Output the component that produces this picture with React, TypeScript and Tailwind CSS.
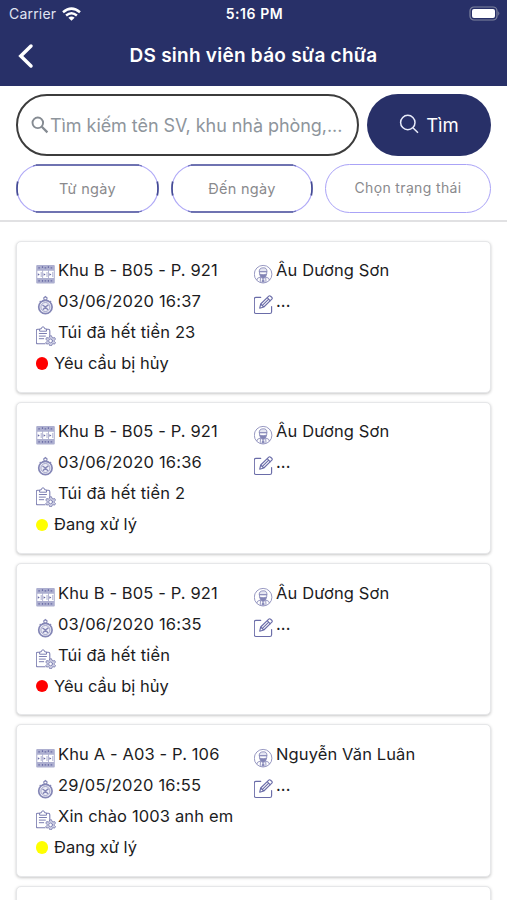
import React from "react";

type Request = {
  room: string;
  time: string;
  note: string;
  status: string;
  dot: string;
  name: string;
};

const requests: Request[] = [
  { room: "Khu B - B05 - P. 921", time: "03/06/2020 16:37", note: "Túi đã hết tiền 23", status: "Yêu cầu bị hủy", dot: "bg-[#ff0000]", name: "Âu Dương Sơn" },
  { room: "Khu B - B05 - P. 921", time: "03/06/2020 16:36", note: "Túi đã hết tiền 2", status: "Đang xử lý", dot: "bg-[#ffff00]", name: "Âu Dương Sơn" },
  { room: "Khu B - B05 - P. 921", time: "03/06/2020 16:35", note: "Túi đã hết tiền", status: "Yêu cầu bị hủy", dot: "bg-[#ff0000]", name: "Âu Dương Sơn" },
  { room: "Khu A - A03 - P. 106", time: "29/05/2020 16:55", note: "Xin chào 1003 anh em", status: "Đang xử lý", dot: "bg-[#ffff00]", name: "Nguyễn Văn Luân" },
];

const iconClass = "mt-[9px] h-5 w-5 shrink-0";

function RoomIcon() {
  return (
    <svg className={iconClass} viewBox="0 0 20 20" fill="none">
      <rect x="0.2" y="1" width="18.6" height="18.6" rx="1" fill="#adafd0" />
      <path d="M1.3 6.8h4.9v7.2H1.3zM7.1 6.8H12v7.2H7.1zM12.9 6.8h4.9v7.2h-4.9z" fill="#fff" />
      <path d="M1.8 9.2l2 1.3-2 1.3zM7.6 9.2l2 1.3-2 1.3zM13.4 9.2l2 1.3-2 1.3z" fill="#6668a3" />
      <path d="M5.2 8v5M11 8v5M16.8 8v5" stroke="#a5a7ca" strokeWidth="0.9" />
      <path d="M2.3 3.8h1.6M8.6 3.8h1.6M14.6 3.8h1.6M2.3 16.8h1.6M8.6 16.8h1.6M14.6 16.8h1.6M6.5 2.2v1.7M12.4 2.2v1.7M6.5 16v1.7M12.4 16v1.7" stroke="#6c6ea6" strokeWidth="1.2" />
    </svg>
  );
}

function ClockIcon() {
  return (
    <svg className={iconClass} viewBox="0 0 20 20" fill="none" stroke="#8486b6">
      <circle cx="9.4" cy="12" r="6.7" fill="#eeeef6" strokeWidth="1.7" />
      <circle cx="9.4" cy="12" r="4.5" strokeWidth="0.7" />
      <path d="M8.2 5L7.7 3l1.7-1.5L11.1 3l-.5 2zM3.7 6l1.1 1.1M15.1 6L14 7.1" strokeWidth="1.1" />
      <path d="M6.5 10l2.9 2 3-2.1M9.4 12L7 14.8M9.4 12l2.5 2.9" strokeWidth="1.4" />
    </svg>
  );
}

function TaskIcon() {
  return (
    <svg className={iconClass} viewBox="0 0 20 20" fill="none" stroke="#7c7eb1" strokeLinecap="round" strokeLinejoin="round">
      <path d="M3.3 3.2H1.7Q.3 3.2.3 4.7v11.5q0 1.5 1.4 1.5h7.4M10.9 3.2h1.5q1.4 0 1.4 1.5v4.5" strokeWidth="1.1" />
      <path d="M3.6 4.8V2.9h1.6Q5.5.8 7 .8t1.8 2.1h1.7v1.9z" strokeWidth="1" />
      <path d="M3.3 7.5h7.2M3.3 10.1h6.1M3.3 12.7h4.4" strokeWidth="1" />
      <path d="M13.8 9.8h1.7l.5 1.6 1 .6 1.6-.5.9 1.6-1.2 1.2v1.1l1.2 1.2-.9 1.5-1.6-.4-1 .6-.5 1.5h-1.7l-.5-1.5-1-.6-1.6.4-.9-1.5 1.2-1.2v-1.1l-1.2-1.2.9-1.6 1.6.5 1-.6z" fill="#d0d1e5" strokeWidth="0.9" />
      <circle cx="14.6" cy="14.9" r="1.9" fill="#fff" strokeWidth="0.9" />
    </svg>
  );
}

function StudentIcon() {
  return (
    <svg className={iconClass} viewBox="0 0 20 20" fill="none" stroke="#8587b7" strokeWidth="0.85">
      <circle cx="9.1" cy="10.2" r="8.8" />
      <path d="M5.2 7.6Q5.1 4 9.1 3.8t3.9 3.8z" fill="#e5e6f1" />
      <path d="M4.9 7.8h8.4M5.5 8v1.9q.7 3.4 3.6 3.4t3.6-3.4V8" />
      <path d="M5.9 10.2q3.2 1 6.4 0l-.7 2.2-2.5 2-2.5-2z" fill="#8284b4" />
      <path d="M2.7 16.2l1-2 3-1.3 2.4 2.5 2.4-2.5 3 1.3 1 2M6.5 13.2l-.3 4.9M11.7 13.2l.3 4.9" />
      <path d="M8 15.5h2.2l.5 3.1H7.5z" fill="#8b8dbb" stroke="none" />
    </svg>
  );
}

function EditIcon() {
  return (
    <svg className={iconClass} viewBox="0 0 20 20" fill="none" stroke="#6a6ca8" strokeWidth="1.15" strokeLinecap="round" strokeLinejoin="round">
      <path d="M6.7 2.4H2Q.3 2.4.3 4.1v12.6q0 1.8 1.7 1.8h13.9q1.7 0 1.7-1.8V11.5" />
      <path d="M5.7 13.2l1-4.2 7.8-7.7q1-1 2.1-.1l1.1 1q1 1 .1 2L9.8 12zM13.2 2.7l3.1 3.1M6.7 9l3 3M8.4 10.4l5.8-5.7" />
    </svg>
  );
}

function DateChip({ label, className }: { label: string; className: string }) {
  return (
    <button className={`relative flex h-[49px] items-center justify-center text-[14.5px] text-[#8a8a8d] ${className}`}>
      <svg className="absolute inset-0 h-full w-full" viewBox="0 0 143 49" preserveAspectRatio="none" fill="none">
        <rect x="1" y="1" width="141" height="47" rx="23.5" stroke="#b1abf7" strokeWidth="1.2" />
        <path d="M20 1H123M20 48H123" stroke="#4c5399" strokeWidth="1.7" />
        <path d="M20 1l-3 1M123 1l3 1M20 48l-3-1M123 48l3-1" stroke="#6c70b8" strokeWidth="1.3" />
        <path d="M1.7 17.5Q.3 24.5 1.7 31.5M141.3 17.5q1.4 7 0 14" stroke="#454c94" strokeWidth="1.7" />
      </svg>
      <span>{label}</span>
    </button>
  );
}

function Row({ icon, children, tracking = "" }: { icon: React.ReactNode; children: React.ReactNode; tracking?: string }) {
  return (
    <div className="flex h-[31px] items-start gap-[2.5px]">
      {icon}
      <span className={`leading-[31px] whitespace-nowrap ${tracking}`}>{children}</span>
    </div>
  );
}

function Card({ r }: { r: Request }) {
  return (
    <article className="flex h-[152.3px] shrink-0 rounded-[5px] border border-[#e6e7e9] bg-white pt-[13.5px] pl-[18.5px] text-[16.5px] text-[#1c1c1e] shadow-[0_1px_3px_rgba(0,0,0,0.22)]">
      <div className="w-[218px]">
        <Row icon={<RoomIcon />} tracking="tracking-[0.12px]">{r.room}</Row>
        <Row icon={<ClockIcon />} tracking="tracking-[0.2px]">{r.time}</Row>
        <Row icon={<TaskIcon />} tracking="tracking-[0.14px]">{r.note}</Row>
        <div className="flex h-[31px] items-center gap-[6px]">
          <span className={`h-[12.5px] w-[12.5px] rounded-full ${r.dot}`} />
          <span>{r.status}</span>
        </div>
      </div>
      <div>
        <Row icon={<StudentIcon />} tracking="tracking-[0.12px]">{r.name}</Row>
        <Row icon={<EditIcon />}><span className="tracking-[0.1px]">...</span></Row>
      </div>
    </article>
  );
}

export default function App() {
  return (
    <main className="flex h-[900px] w-[507px] flex-col overflow-hidden bg-white font-['Inter','Liberation_Sans',sans-serif]">
      <header className="h-[86px] shrink-0 bg-[#283068] text-white">
        <div className="grid h-[27px] grid-cols-3 items-center pr-[7px] pl-[9px] text-[14px]">
          <div className="flex items-center gap-[6px] text-[#e0e4f2]">
            <span className="tracking-[0.2px]">Carrier</span>
            <svg className="h-[14px] w-[19px]" viewBox="0 0 19 14" fill="none" stroke="#fff" strokeWidth="2.5">
              <path d="M1 5.2Q9.5-2 18 5.2M4.1 8.5q5.4-4.5 10.8 0" />
              <path d="M6.4 10.7q3.1-2.5 6.2 0L9.5 13.8z" fill="#fff" stroke="none" />
            </svg>
          </div>
          <span className="text-center font-semibold tracking-[0.55px]">5:16 PM</span>
          <svg className="h-[15px] w-[31px] justify-self-end" viewBox="0 0 31 15">
            <rect x="1" y="1" width="27" height="13" rx="4" fill="none" stroke="#80859f" strokeWidth="1.2" />
            <rect x="3" y="3" width="23" height="9" rx="2" fill="#fff" />
            <path d="M29.3 5.3q2 2.2 0 4.4z" fill="#80859f" />
          </svg>
        </div>
        <div className="grid h-[58px] grid-cols-[40px_1fr_40px] items-center">
          <svg className="ml-[17px] h-[26px] w-[18px]" viewBox="0 0 18 26" fill="none" stroke="#fff" strokeWidth="3.5" strokeLinecap="round">
            <path d="M14 3L3.8 13 14 23" />
          </svg>
          <h1 className="pt-px text-center text-[19px] font-semibold tracking-[0.25px] whitespace-nowrap">DS sinh viên báo sửa chữa</h1>
        </div>
      </header>

      <section className="flex h-[136px] shrink-0 flex-col gap-2 border-b-2 border-[#e1e1e3] px-4 pt-2">
        <div className="flex h-[62px] gap-2">
          <div className="flex w-[343px] items-center rounded-full border-2 border-[#3c3c3c] pl-[13px] text-[#8e959c]">
            <svg className="mr-px h-[18px] w-[18px] shrink-0" viewBox="0 0 18 18" fill="none" stroke="#858b92" strokeWidth="1.9">
              <circle cx="6.8" cy="6.8" r="5.3" />
              <path d="M10.8 10.8L16.4 16.4" strokeWidth="2.3" />
            </svg>
            <span className="text-[18px] tracking-[-0.06px] whitespace-nowrap">Tìm kiếm tên SV, khu nhà phòng,...</span>
          </div>
          <button className="flex w-[124px] items-center justify-center gap-[7px] rounded-full bg-[#283068] pt-px text-[18.5px] text-white">
            <svg className="mb-[3px] h-[20px] w-[20px]" viewBox="0 0 20 20" fill="none" stroke="#e9ecfa" strokeWidth="1.5">
              <circle cx="8.8" cy="8.5" r="7.2" />
              <path d="M13.9 13.7L19 18.8" />
            </svg>
            <span>Tìm</span>
          </button>
        </div>
        <div className="flex h-[49px] gap-3">
          <DateChip label="Từ ngày" className="w-[143px] pt-px tracking-[0.3px]" />
          <DateChip label="Đến ngày" className="w-[142px] pt-px tracking-[0.3px]" />
          <button className="flex w-[166px] items-center justify-center rounded-full border border-[#aaa3f7] pb-[3px] text-[14px] tracking-[0.35px] text-[#8a8a8d]">Chọn trạng thái</button>
        </div>
      </section>

      <section className="flex min-h-0 flex-1 flex-col gap-[9px] overflow-hidden px-4 pt-[18.5px]">
        {requests.map((r) => (
          <Card key={r.time} r={r} />
        ))}
        <article className="h-[152.3px] shrink-0 rounded-[5px] border border-[#e6e7e9] bg-white shadow-[0_1px_3px_rgba(0,0,0,0.22)]" />
      </section>
    </main>
  );
}
